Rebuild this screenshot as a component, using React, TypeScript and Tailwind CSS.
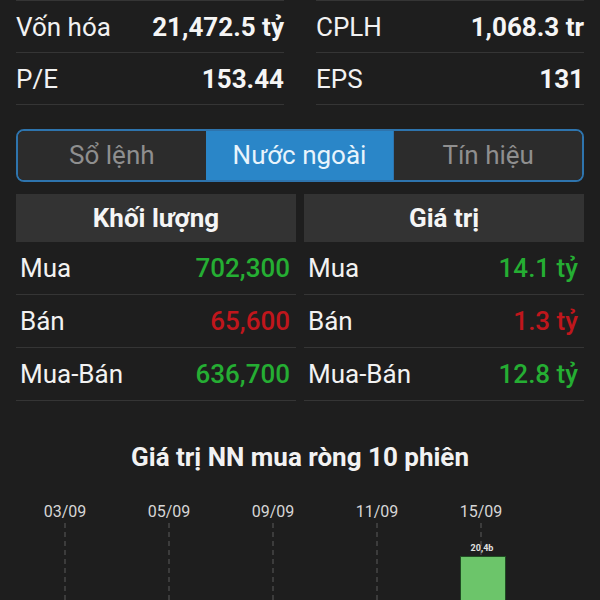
import React from "react"

const green = "text-[#25ae33]"
const red = "text-[#c0161c]"

const StatRow = ({ label, value }: { label: string; value: string }) => (
  <div className="flex items-center justify-between h-[52px] pt-px border-b border-[#353535]">
    <span className="text-[26px] text-[#f2f2f2]">{label}</span>
    <span className="text-[26px] font-bold text-[#f5f5f5]">{value}</span>
  </div>
)

const FlowRow = ({ label, value, color }: { label: string; value: string; color: string }) => (
  <div className="flex items-center justify-between h-[53px] pl-1 pr-1.5 border-b border-[#353535]">
    <span className="text-[26px] text-[#f2f2f2]">{label}</span>
    <span className={`text-[26px] font-medium ${color}`}>{value}</span>
  </div>
)

const FlowTable = ({ title, rows }: { title: string; rows: { label: string; value: string; color: string }[] }) => (
  <div>
    <div className="h-[48px] bg-[#333333] flex items-center justify-center text-[26px] font-bold text-[#f5f5f5]">
      {title}
    </div>
    {rows.map((r) => (
      <FlowRow key={r.label} {...r} />
    ))}
  </div>
)

const Chart = () => {
  const slot = 52
  const start = 39
  const labels = ["03/09", "05/09", "09/09", "11/09", "15/09"]
  return (
    <svg width="600" height="130" className="block">
      {labels.map((d, i) => {
        const cx = start + slot * (i * 2) + slot / 2
        return (
          <g key={d}>
            <text x={cx} y={47} textAnchor="middle" fontSize="16" fill="#d6d6d6" fontFamily="Roboto, sans-serif">
              {d}
            </text>
            <line x1={cx} y1={53} x2={cx} y2={130} stroke="#5a5a5a" strokeWidth="1" strokeDasharray="5 4" />
          </g>
        )
      })}
      {/* 15/09 bar */}
      <rect x={460.5} y={86.5} width={45} height={50} fill="#6cc56a" stroke="#1f4d22" strokeWidth="1" />
      <text x={482} y={81} textAnchor="middle" fontSize="9" fontWeight="bold" fill="#e0e0e0" fontFamily="Roboto, sans-serif">
        20,4b
      </text>
    </svg>
  )
}

export default function App() {
  return (
    <div className="w-[600px] h-[600px] overflow-hidden bg-[#1e1e1e] text-white font-[Roboto,sans-serif]">
      <div className="grid grid-cols-2 gap-8 px-4">
        <div className="border-t border-[#353535]">
          <StatRow label="Vốn hóa" value="21,472.5 tỷ" />
          <StatRow label="P/E" value="153.44" />
        </div>
        <div className="border-t border-[#353535]">
          <StatRow label="CPLH" value="1,068.3 tr" />
          <StatRow label="EPS" value="131" />
        </div>
      </div>

      <div className="mt-[24px] mx-4 h-[53px] flex rounded-lg border-2 border-[#2e74ad] overflow-hidden">
        <div className="flex-1 flex items-center justify-center bg-[#2c2c2c] text-[26px] text-[#8f8f8f]">Sổ lệnh</div>
        <div className="flex-1 flex items-center justify-center bg-[#2a86c8] text-[26px] text-[#e8f4fc]">Nước ngoài</div>
        <div className="flex-1 flex items-center justify-center bg-[#2c2c2c] text-[26px] text-[#8f8f8f] border-l border-[#2e74ad]">
          Tín hiệu
        </div>
      </div>

      <div className="mt-3 mx-4 grid grid-cols-2 gap-2">
        <FlowTable
          title="Khối lượng"
          rows={[
            { label: "Mua", value: "702,300", color: green },
            { label: "Bán", value: "65,600", color: red },
            { label: "Mua-Bán", value: "636,700", color: green },
          ]}
        />
        <FlowTable
          title="Giá trị"
          rows={[
            { label: "Mua", value: "14.1 tỷ", color: green },
            { label: "Bán", value: "1.3 tỷ", color: red },
            { label: "Mua-Bán", value: "12.8 tỷ", color: green },
          ]}
        />
      </div>

      <div className="mt-[43px] h-[26px] flex items-center justify-center text-[26px] font-bold text-[#f2f2f2]">
        Giá trị NN mua ròng 10 phiên
      </div>
      <Chart />
    </div>
  )
}
